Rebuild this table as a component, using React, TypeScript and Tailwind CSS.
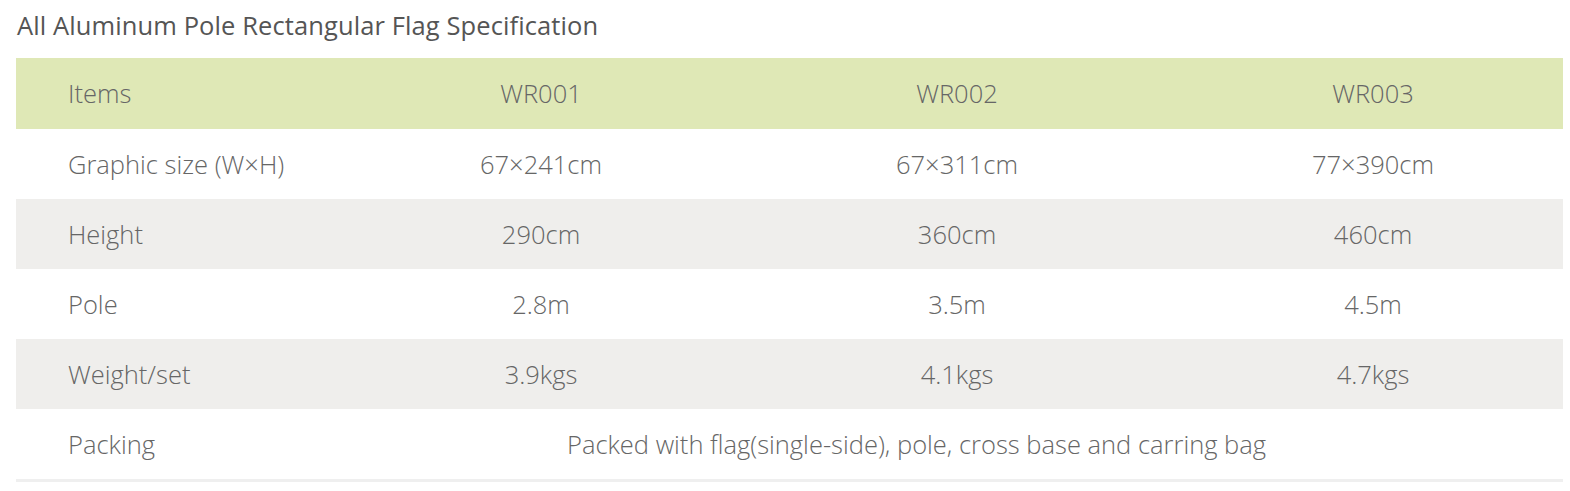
import React from 'react';

type Row = {
  label: string;
  values: string[];
  shaded?: boolean;
};

const rows: Row[] = [
  { label: 'Graphic size (W×H)', values: ['67×241cm', '67×311cm', '77×390cm'] },
  { label: 'Height', values: ['290cm', '360cm', '460cm'], shaded: true },
  { label: 'Pole', values: ['2.8m', '3.5m', '4.5m'] },
  { label: 'Weight/set', values: ['3.9kgs', '4.1kgs', '4.7kgs'], shaded: true },
];

const cols = 'grid grid-cols-[317px_416px_416px_1fr] items-center';

export default function App() {
  return (
    <div className="relative w-[1570px] h-[491px] bg-white font-['Open_Sans',sans-serif] text-[#666]">
      <h1 className="absolute left-[17px] top-[8px] text-[25.5px] leading-[34px] text-[#555] tracking-[0.1px]">
        All Aluminum Pole Rectangular Flag Specification
      </h1>
      <div className="pt-[58px] pl-[16px] w-[1563px]">
        <div className={`${cols} h-[71px] bg-[#dfe8b6] font-light text-[25.5px]`}>
          <span className="pl-[52px]">Items</span>
          <span className="text-center">WR001</span>
          <span className="text-center">WR002</span>
          <span className="text-center pl-[18px]">WR003</span>
        </div>
        {rows.map((r) => (
          <div
            key={r.label}
            className={`${cols} h-[70px] font-light text-[25.5px] ${r.shaded ? 'bg-[#efeeec]' : ''}`}
          >
            <span className="pl-[52px]">{r.label}</span>
            <span className="text-center">{r.values[0]}</span>
            <span className="text-center">{r.values[1]}</span>
            <span className="text-center pl-[18px]">{r.values[2]}</span>
          </div>
        ))}
        <div className={`${cols} h-[73px] border-b-[3px] border-[#efefef] font-light text-[25.5px]`}>
          <span className="pl-[52px]">Packing</span>
          <span className="col-span-3 text-center pr-[63px]">
            Packed with flag(single-side), pole, cross base and carring bag
          </span>
        </div>
      </div>
    </div>
  );
}
